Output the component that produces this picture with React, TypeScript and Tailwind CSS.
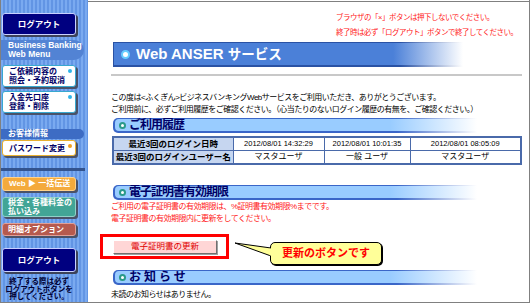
import React from "react";

const navy = "text-[#000066]";

function SectionBar({ children, wide = true }: { children: React.ReactNode; wide?: boolean }) {
  return (
    <div className="ml-[2px] w-[364px] h-[15px] rounded-l-[5px] bg-[linear-gradient(90deg,#3a66c8_0%,#3a66c8_78%,#ffffff_100%)] pt-px pb-[2px] pl-[2px]">
      <div className="h-full rounded-l-[4px] bg-[linear-gradient(90deg,#99ccff_0%,#99ccff_76%,#ffffff_100%)] flex items-center pl-[4px]">
        <span className="w-[7px] h-[7px] rounded-full border-2 border-[#2a9a8a] bg-white shrink-0" />
        <span className={`ml-[3px] text-[12px] font-bold tracking-[-1px] leading-none ${navy}`}>{children}</span>
      </div>
    </div>
  );
}

function WhiteBtn({ lines, border, dot, h, mt }: { lines: string[]; border: string; dot: string; h: string; mt: string }) {
  return (
    <div className={`${mt} ${h} ml-px w-[74px] rounded-[3px] bg-white border ${border} shadow-[2px_2px_0_#4a5268] relative flex flex-col justify-center pl-[6px] text-[8px] leading-[9px] font-bold ${navy}`}>
      {lines.map((l) => (
        <div key={l}>{l}</div>
      ))}
      <span className={`absolute right-[3px] top-[3px] w-[4px] h-[4px] rounded-full ${dot}`} />
    </div>
  );
}

export default function App() {
  return (
    <div className="w-[531px] h-[304px] bg-white font-['Liberation_Sans','Noto_Sans_CJK_JP',sans-serif] text-black overflow-hidden">
      <div className="flex w-[530px] h-[303px] border-l border-b border-r border-[#808080]">
        {/* Sidebar */}
        <aside className="w-[87px] shrink-0 flex flex-col bg-[repeating-linear-gradient(90deg,#7aaaf0_0px,#7aaaf0_2px,#6295e4_2px,#6295e4_4px)]">
          <div className="mt-[13px] ml-px w-[74px] h-[22px] rounded-[3px] bg-[#000080] border border-[#c8d0ff] shadow-[2px_2px_0_#3c4258] flex items-center justify-center text-white text-[8.5px] font-bold">
            ログアウト
          </div>
          <div className="mt-[5px] w-[83px] h-[20px] rounded-r-full bg-[#5283d4] flex flex-col justify-center pl-[7px] text-white font-bold text-[8.5px] leading-[9px]">
            <div>Business Banking</div>
            <div>Web Menu</div>
          </div>
          <WhiteBtn mt="mt-[5px]" h="h-[22px]" lines={["ご依頼内容の", "照会・予約取消"]} border="border-[#38a8d0]" dot="bg-[#30b4e8]" />
          <WhiteBtn mt="mt-[4px]" h="h-[22px]" lines={["入金先口座", "登録・削除"]} border="border-[#38a8d0]" dot="bg-[#30b4e8]" />
          <div className="mt-[16px] w-[83px] h-[10px] rounded-r-full bg-[#3d6cc4] flex items-center pl-[7px] text-white font-bold text-[8px] leading-none">
            お客様情報
          </div>
          <WhiteBtn mt="mt-[1px]" h="h-[16px]" lines={["パスワード変更"]} border="border-[#e8b030]" dot="bg-[#f0a020]" />
          <div className="mt-[12px] w-[84px] h-[3px] bg-[#33548f]" />
          <div className="mt-[6px] ml-px w-[74px] h-[14px] rounded-[3px] bg-[#f4aa3c] border border-[#ffd28a] shadow-[2px_2px_0_#4a5268] flex items-center pl-[6px] text-white font-bold text-[8px] leading-none">
            Web ▶ 一括伝送
          </div>
          <div className="mt-[6px] ml-px w-[74px] h-[20px] rounded-[3px] bg-[#42a596] border border-[#90d2c8] shadow-[2px_2px_0_#4a5268] flex flex-col justify-center pl-[5px] text-white font-bold text-[8px] leading-[9px]">
            <div>税金・各種料金の</div>
            <div>払い込み</div>
          </div>
          <div className="mt-[6px] ml-px w-[74px] h-[13px] rounded-[3px] bg-[#b65a4e] border border-[#e0a098] shadow-[2px_2px_0_#4a5268] flex items-center pl-[5px] text-white font-bold text-[8px] leading-none">
            明細オプション
          </div>
          <div className="mt-[12px] ml-px w-[74px] h-[24px] rounded-[3px] bg-[#000080] border border-[#c8d0ff] shadow-[2px_2px_0_#3c4258] flex items-center justify-center text-white text-[8.5px] font-bold">
            ログアウト
          </div>
          <div className="mt-[6px] w-[76px] text-center text-[7.5px] leading-[7.5px] font-bold text-[#000033]">
            <div>終了する際は必ず</div>
            <div>ログアウトボタンを</div>
            <div>押してください。</div>
          </div>
        </aside>

        {/* Main */}
        <main className="flex-1 mt-px border-t border-[#808080] flex flex-col pl-[23px] pr-[8px]">
          <div className="ml-[225px] mt-[8px] text-[7.5px] leading-[15px] tracking-[-0.5px] text-[#ff2020] whitespace-nowrap">
            <div>ブラウザの「×」ボタンは押下しないでください。</div>
            <div>終了時は必ず「ログアウト」ボタンで終了してください。</div>
          </div>

          <div className="mt-[2px] ml-[2px] w-[350px] h-[25px] bg-[linear-gradient(90deg,#2a52a4_0%,#2a52a4_82%,#ffffff_100%)] pt-px pl-px pb-[2px]">
            <div className="h-full bg-[linear-gradient(90deg,#4b80d8_0%,#4b80d8_80%,#ffffff_100%)] flex items-center pl-[7px]">
              <span className="w-[9px] h-[9px] rounded-full bg-white border-2 border-[#66ccff] shrink-0" />
              <span className="ml-[6px] text-white font-bold text-[15px] leading-none whitespace-nowrap">
                Web ANSER <span className="text-[13.5px]">サービス</span>
              </span>
            </div>
          </div>
          <div className="mt-[7px] h-[2px] bg-[#c8c8c8]" />

          <div className="mt-[16px] text-[8px] leading-[12px] tracking-[-0.5px] whitespace-nowrap">
            <div>この度は&lt;ふくぎん&gt;ビジネスバンキングWebサービスをご利用いただき、ありがとうございます。</div>
            <div>ご利用前に、必ずご利用履歴をご確認ください。（心当たりのないログイン履歴の有無を、ご確認ください。）</div>
          </div>

          <div className="mt-[2px]">
            <SectionBar>ご利用履歴</SectionBar>
          </div>

          <table className="mt-[3px] ml-px w-[408px] border-collapse border-2 border-[#4a6aaa] table-fixed">
            <colgroup>
              <col className="w-[120px]" />
              <col className="w-[91px]" />
              <col className="w-[86px]" />
              <col className="w-[111px]" />
            </colgroup>
            <tbody>
              <tr className="h-[13px]">
                <td className="border border-[#4a6aaa] bg-[#c6d6f0] text-center text-[8.5px] font-bold leading-none p-0">最近3回のログイン日時</td>
                <td className="border border-[#4a6aaa] text-center text-[7.5px] leading-none p-0">2012/08/01 14:32:29</td>
                <td className="border border-[#4a6aaa] text-center text-[7.5px] leading-none p-0">2012/08/01 10:01:35</td>
                <td className="border border-[#4a6aaa] text-center text-[7.5px] leading-none p-0">2012/08/01 08:05:09</td>
              </tr>
              <tr className="h-[14px]">
                <td className="border border-[#4a6aaa] bg-[#c6d6f0] text-center text-[8.5px] font-bold leading-none p-0 whitespace-nowrap">最近3回のログインユーザー名</td>
                <td className="border border-[#4a6aaa] text-center text-[8px] leading-none p-0">マスタユーザ</td>
                <td className="border border-[#4a6aaa] text-center text-[8px] leading-none p-0">一般 ユーザ</td>
                <td className="border border-[#4a6aaa] text-center text-[8px] leading-none p-0">マスタユーザ</td>
              </tr>
            </tbody>
          </table>

          <div className="mt-[20px]">
            <SectionBar>電子証明書有効期限</SectionBar>
          </div>
          <div className="mt-px text-[8px] leading-[12px] tracking-[-0.5px] text-[#ff2020] whitespace-nowrap">
            <div>ご利用の電子証明書の有効期限は、%証明書有効期限%までです。</div>
            <div>電子証明書の有効期限内に更新をしてください。</div>
          </div>

          <div className="mt-[9px] -ml-[11px] flex items-start">
            <div className="w-[129px] h-[25px] border-[3px] border-[#ff0000] flex items-center pl-[10px]">
              <div className="w-[104px] h-[14px] bg-[#ffd6d6] border border-t-[#ffffff] border-l-[#ffffff] border-r-[#707070] border-b-[#707070] shadow-[1px_1px_0_#a0a0a0] flex items-center justify-center text-[8.5px] leading-none text-[#e00000]">
                電子証明書の更新
              </div>
            </div>
            <svg width="42" height="30" viewBox="0 0 42 30" className="shrink-0 relative z-10 -mr-[1px]">
              <polygon points="6,9 42,14 42,22" fill="#ffff99" stroke="#000" strokeWidth="1" />
              <line x1="41.5" y1="14.5" x2="41.5" y2="21.5" stroke="#ffff99" strokeWidth="1.5" />
            </svg>
            <div className="mt-[8px] w-[112px] h-[23px] rounded-[5px] bg-[#ffff99] border border-black shadow-[1px_1px_0_#000] flex items-center justify-center text-[11px] font-bold leading-none text-[#ff0000]">
              更新のボタンです
            </div>
          </div>

          <div className="mt-[5px]">
            <SectionBar>
              <span className="tracking-[3px]">お知らせ</span>
            </SectionBar>
          </div>
          <div className="mt-[4px] text-[8px] leading-[12px] tracking-[-0.5px]">未読のお知らせはありません。</div>
        </main>
      </div>
    </div>
  );
}
